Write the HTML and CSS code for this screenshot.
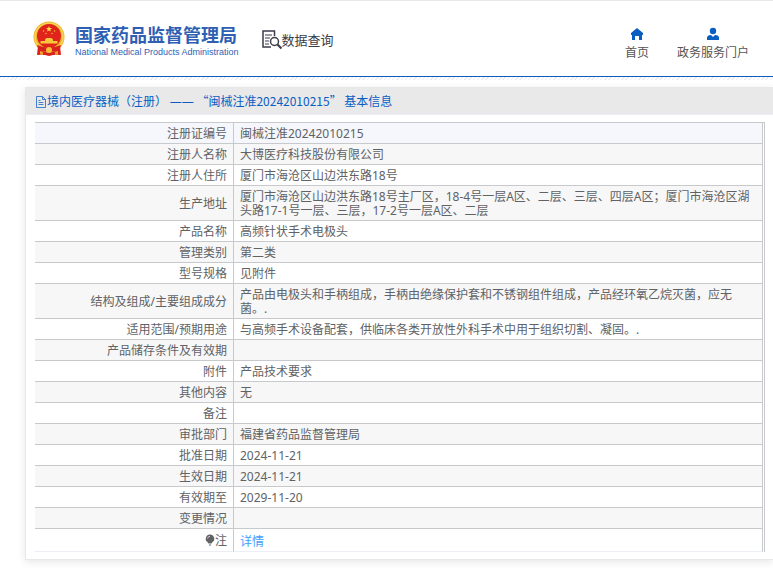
FILE: index.html
```
<!DOCTYPE html>
<html lang="zh-CN">
<head>
<meta charset="utf-8">
<title>国家药品监督管理局 数据查询</title>
<link rel="stylesheet" href="styles.css">
</head>
<body>
<header class="top">
  <a class="brand" href="#">
    <svg class="emblem" viewBox="0 0 32 36" aria-hidden="true">
      <path d="M5 25h22l1 9q-6-1-12 1-6-2-12-1z" fill="#d8211d"/>
      <circle cx="16" cy="16" r="15.500" fill="#efb52b"/>
      <circle cx="16" cy="16" r="14" fill="none" stroke="#f9d965" stroke-width="1.200"/>
      <circle cx="16" cy="15" r="12" fill="#e0241c"/>
      <path d="M16 5l.8 2 2.200.1-1.700 1.400.6 2.100-1.900-1.200-1.900 1.200.6-2.100L13 7.100l2.200-.1z" fill="#ffd84a"/>
      <g fill="#f7c83a"><circle cx="10.500" cy="10" r=".7"/><circle cx="21.500" cy="10" r=".7"/><circle cx="13" cy="12.500" r=".7"/><circle cx="19" cy="12.500" r=".7"/>
      <path d="M12 18.500l1.500-1.500h5l1.500 1.500v1.500h4.500v2.500h-17V20H12z"/></g>
      <path d="M4 24q12 5 24 0l-1.500 5q-10.500 4-21 0z" fill="#d8211d"/>
      <circle cx="16" cy="29" r="3" fill="#f3c038"/>
      <path d="M7 30l3 1v3l-3-.5zM25 30l-3 1v3l3-.5z" fill="#f0a02a"/>
    </svg>
    <span class="brand-text">
      <span class="brand-cn">国家药品监督管理局</span>
      <span class="brand-en">National Medical Products Administration</span>
    </span>
  </a>
  <a class="query" href="#">
    <svg class="query-icon" viewBox="0 0 20 20" fill="none" stroke="#3c3c4c" aria-hidden="true">
      <path d="M12.500 6V1H1v16h8" stroke-width="1.500"/>
      <path d="M3 5h7M3 8h5M3 11h4M3 14h4" stroke-width="1.200"/>
      <circle cx="12.500" cy="11.500" r="4" stroke-width="1.500"/>
      <path d="M15.500 14.500l4 4" stroke-width="2.200"/>
    </svg>
    <span>数据查询</span>
  </a>
  <nav class="nav">
    <a href="#">
      <svg class="nav-icon" viewBox="0 0 14 14" fill="#0a5ec2" aria-hidden="true"><path d="M7 1l6 5v2h-1v5H9V9H5v4H2V8H1V6z"/></svg>
      首页
    </a>
    <a href="#">
      <svg class="nav-icon" viewBox="0 0 14 14" fill="#0a5ec2" aria-hidden="true"><circle cx="7" cy="4" r="3.200"/><path d="M1 13v-2q0-3 4-3l2 2 2-2q4 0 4 3v2z"/></svg>
      政务服务门户
    </a>
  </nav>
</header>
<main class="card">
  <h1 class="card-head">
    <svg class="doc-icon" viewBox="0 0 12 12" fill="none" stroke="#1a62c4" stroke-width=".8" aria-hidden="true"><path d="M1.500.5h6l3 3v8h-9zM7.500.5v3h3M3.500 4.500h2M3.500 6.500h5M3.500 8.500h5"/></svg>
    <span>境内医疗器械（注册） <span class="dash">——</span> “闽械注准20242010215” 基本信息</span>
  </h1>
  <div class="card-body">
    <table class="info">
      <tbody>
      <tr><th scope="row">注册证编号</th><td>闽械注准20242010215</td></tr>
      <tr><th scope="row">注册人名称</th><td>大博医疗科技股份有限公司</td></tr>
      <tr><th scope="row">注册人住所</th><td>厦门市海沧区山边洪东路18号</td></tr>
      <tr><th scope="row">生产地址</th><td>厦门市海沧区山边洪东路18号主厂区，18-4号一层A区、二层、三层、四层A区；厦门市海沧区湖头路17-1号一层、三层，17-2号一层A区、二层</td></tr>
      <tr><th scope="row">产品名称</th><td>高频针状手术电极头</td></tr>
      <tr><th scope="row">管理类别</th><td>第二类</td></tr>
      <tr><th scope="row">型号规格</th><td>见附件</td></tr>
      <tr><th scope="row">结构及组成/主要组成成分</th><td>产品由电极头和手柄组成，手柄由绝缘保护套和不锈钢组件组成，产品经环氧乙烷灭菌，应无菌。.</td></tr>
      <tr><th scope="row">适用范围/预期用途</th><td>与高频手术设备配套，供临床各类开放性外科手术中用于组织切割、凝固。.</td></tr>
      <tr><th scope="row">产品储存条件及有效期</th><td></td></tr>
      <tr><th scope="row">附件</th><td>产品技术要求</td></tr>
      <tr><th scope="row">其他内容</th><td>无</td></tr>
      <tr><th scope="row">备注</th><td></td></tr>
      <tr><th scope="row">审批部门</th><td>福建省药品监督管理局</td></tr>
      <tr><th scope="row">批准日期</th><td>2024-11-21</td></tr>
      <tr><th scope="row">生效日期</th><td>2024-11-21</td></tr>
      <tr><th scope="row">有效期至</th><td>2029-11-20</td></tr>
      <tr><th scope="row">变更情况</th><td></td></tr>
      <tr class="note"><th scope="row"><svg class="bulb" viewBox="0 0 10 12" aria-hidden="true"><path d="M5 .5a4.200 4.200 0 0 1 2.500 7.600L6.500 9.500h-3L2.500 8.100A4.200 4.200 0 0 1 5 .5zM4 10.500h2v1H4z" fill="#606266"/><path d="M2.500 4.500Q3 2.500 5 2.300" fill="none" stroke="#fff" stroke-width=".7"/></svg>注</th><td><a href="#">详情</a></td></tr>
      </tbody>
    </table>
  </div>
</main>
</body>
</html>
```
FILE: styles.css
```
* { box-sizing: border-box; }

body {
  margin: 0;
  background: #fff;
  color: #606266;
  font: 12px/14px "Noto Sans", "Noto Sans CJK SC", sans-serif;
  overflow-x: hidden;
}

a { color: inherit; text-decoration: none; }

.top {
  display: flex;
  align-items: center;
  height: 77px;
  padding: 0 24px 0 33px;
  border-top: 1px solid #e8e8e8;
  border-bottom: 1px solid #0a5ec2;
}

/* faint hatched strip under the header rule */
.top + .card::before {
  content: "";
  position: absolute;
  left: 0;
  right: 0;
  top: 77px;
  height: 3px;
  background: repeating-linear-gradient(135deg, #ececec 0 1px, #fff 1px 3px);
}

.brand { display: flex; align-items: center; gap: 10px; }
.emblem { width: 32px; height: 36px; }
.brand-text { display: flex; flex-direction: column; color: #2f5fb3; padding-top: 6px; }
.brand-cn { font-size: 18px; line-height: 20px; font-weight: 700; }
.brand-en { font: 400 9px/14px "Liberation Sans", sans-serif; }

.query {
  display: flex;
  align-items: center;
  margin-left: 23px;
  padding-top: 3px;
  color: #3c3c44;
  font-size: 13px;
  line-height: 20px;
}
.query-icon { width: 20px; height: 20px; }

.nav { display: flex; gap: 28px; margin-left: auto; padding-top: 10px; color: #555; }
.nav a { display: flex; flex-direction: column; align-items: center; gap: 4px; line-height: 16px; }
.nav-icon { width: 14px; height: 14px; }

.card {
  margin: 10px 0 16px 25px;
  border: 1px solid #e8e8ea;
  border-right: 0;
  box-shadow: 0 2px 8px rgba(0, 0, 0, 0.1);
}

.card-head {
  display: flex;
  align-items: center;
  margin: 0;
  padding: 1px 9px 0;
  height: 27px;
  background: #e9e9e9;
  border-bottom: 1px solid #ebeef5;
  color: #0a5ec2;
  font-family: "Noto Sans CJK SC", sans-serif;
  font-size: 12px;
  font-weight: 400;
}
.doc-icon { width: 12px; height: 12px; flex: none; }
.dash { font-family: "Noto Sans", sans-serif; }

.card-body { padding: 7px 8px 7px 9px; }

.info {
  width: 100%;
  border-collapse: separate;
  border-spacing: 0;
  border-top: 1px solid #c8c9cc;
  border-right: 1px solid #c8c9cc;
  padding-right: 1px;
}
.info th, .info td {
  padding: 4px 6px 2px;
  border-right: 1px solid #c8c9cc;
  border-bottom: 1px solid #c8c9cc;
  font-weight: 400;
  line-height: 14px;
  height: 21px;
}
.info th { width: 199px; text-align: right; }
.info td { text-align: left; }
.info tr:nth-child(even) { background: #f7f7f7; }
.info tr:first-child { background: #f5f7fc; }
.info .note th, .info .note td { height: 23px; border-bottom-color: #ebeef5; }
.info .note td { padding: 6px 6px 2px; }
.note a { color: #409eff; }
.bulb { width: 10px; height: 12px; vertical-align: -1px; }
```
